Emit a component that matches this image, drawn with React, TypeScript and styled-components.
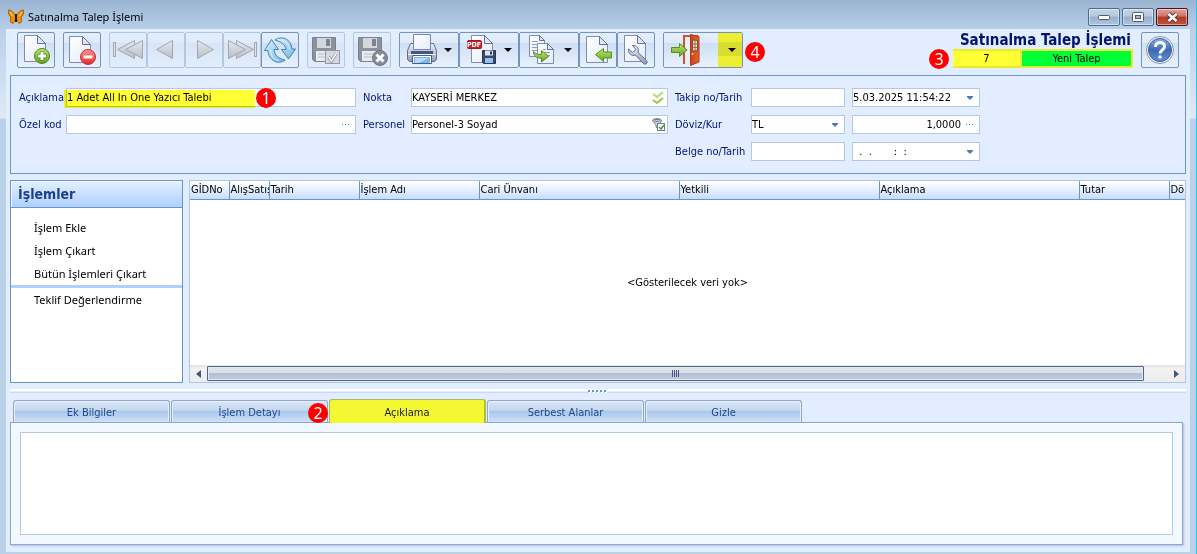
import React, { useState } from "react";
import styled, { createGlobalStyle, css } from "styled-components";

const uiFont = '"DejaVu Sans Condensed", "Liberation Sans", sans-serif';
const menuFont = '"Noto Sans", "Open Sans", sans-serif';

const Global = createGlobalStyle`
  * { box-sizing: border-box; }
  body { margin: 0; font-family: ${uiFont}; font-size: 11px; color: #000; }
  button, input, select, textarea { font: inherit; color: inherit; margin: 0; border-radius: 0; outline: none; }
  svg { display: block; flex: none; }
`;

const Frame = styled.div`
  min-height: 100vh;
  display: flex;
  flex-direction: column;
  padding: 0 6px 2px;
  border-right: 1px solid #22c8ee;
  background: linear-gradient(#9ab4d1 0, #b8cfe9 29px, #dfeaf7 118px, #bad1ea 119px);
`;

const TitleBar = styled.header`
  height: 29px;
  display: flex;
  align-items: center;
  gap: 4px;
  padding: 5px 2px 0 2px;
  font-family: ${menuFont};
`;

const Caption = styled.span`
  flex: 1;
  line-height: 16px;
`;

const WindowButtons = styled.div`
  display: flex;
  gap: 2px;
`;

const WindowButton = styled.button<{ $close?: boolean }>`
  width: 32px;
  height: 18px;
  padding: 0;
  display: grid;
  place-items: center;
  border: 1px solid ${(p) => (p.$close ? "#4b1420" : "#53698a")};
  border-radius: 2px;
  box-shadow: inset 0 0 0 1px rgba(255, 255, 255, 0.45);
  background: ${(p) =>
    p.$close
      ? "linear-gradient(#dda49a 0, #cb7567 45%, #b03a28 50%, #bf5538 100%)"
      : "linear-gradient(#c6d6e8 0, #b4c7dd 45%, #98b0cc 50%, #aec4dd 100%)"};
`;

const Client = styled.main`
  flex: 1;
  display: flex;
  flex-direction: column;
  padding: 3px 4px 7px;
  background: #e2eeff;
`;

const Toolbar = styled.div`
  display: flex;
  align-items: center;
  gap: 8px;
  padding: 0 7px;
`;

const ButtonGroup = styled.div`
  display: flex;
  position: relative;
`;

const ToolButton = styled.button<{ $wide?: number }>`
  width: ${(p) => p.$wide ?? 38}px;
  height: 36px;
  padding: 0;
  display: flex;
  overflow: hidden;
  border: 1px solid #7394be;
  border-radius: 2px;
  background: linear-gradient(#e6effc 0, #deeafa 28%, #cfdff3 30%, #d9e6f7 60%, #e9f2fd 100%);
  &:disabled {
    border-color: #b4c7e0;
    background: linear-gradient(#e3eefd 0, #dfebfb 28%, #d7e5f7 30%, #e3edfb 100%);
  }
`;

const Status = styled.div`
  margin-left: auto;
  width: 183px;
  display: flex;
  flex-direction: column;
  position: relative;
`;

const StatusTitle = styled.h1`
  margin: 0;
  padding-right: 2px;
  font-size: 15px;
  line-height: 17px;
  text-align: right;
  color: #00146e;
`;

const StatusCells = styled.div`
  margin-left: 3px;
  display: grid;
  grid-template-columns: 67px 1fr;
  gap: 2px;
  padding: 2px 2px 2px 0;
  background: #e9ea35;
`;

const StatusCell = styled.span<{ $green?: boolean }>`
  line-height: 15px;
  text-align: center;
  background: ${(p) => (p.$green ? "#00ff37" : "#ffff33")};
`;

const badgeAt = {
  description: css`left: 245px; top: 12px;`,
  tab: css`right: -1px; top: 2px;`,
  status: css`left: -21px; top: 17px;`,
  exit: css`left: 82px; top: 10px;`,
};

const Badge = styled.span<{ $at: keyof typeof badgeAt }>`
  position: absolute;
  z-index: 2;
  ${(p) => badgeAt[p.$at]}
  width: 20px;
  height: 20px;
  border-radius: 50%;
  background: #fe0000;
  color: #fff;
  font-family: ${menuFont};
  font-size: 16px;
  line-height: 20px;
  text-align: center;
`;

const FormPanel = styled.form`
  position: relative;
  margin-top: 7px;
  min-height: 99px;
  padding: 12px 8px;
  display: grid;
  grid-template-columns: 40px 290px 41px 257px 69px 94px 128px;
  grid-auto-rows: 19px;
  column-gap: 7px;
  row-gap: 8px;
  align-items: center;
  border: 1px solid #6795cf;
  color: #00147a;
`;

const Label = styled.label<{ $col?: number }>`
  white-space: nowrap;
  line-height: 16px;
  ${(p) => p.$col && `grid-column-start: ${p.$col};`}
`;

const Field = styled.div`
  height: 19px;
  display: flex;
  align-items: center;
  background: #fff;
  border: 1px solid #b3c8e4;
  color: #000;
  position: relative;
`;

const TextInput = styled.input<{ $right?: boolean }>`
  flex: 1;
  min-width: 0;
  height: 17px;
  padding: 0;
  border: 0;
  background: none;
  text-align: ${(p) => (p.$right ? "right" : "left")};
`;

const Currency = styled.select`
  flex: 1;
  height: 17px;
  padding: 0;
  border: 0;
  appearance: none;
  background: none;
`;

const FieldButton = styled.button`
  width: 18px;
  height: 17px;
  padding: 0;
  border: 0;
  background: none;
  display: grid;
  place-items: center;
`;

const ArrowMark = styled.span`
  width: 18px;
  display: grid;
  place-items: center;
  pointer-events: none;
`;

const Marker = styled.span`
  position: absolute;
  inset: 1px 100px -2px -3px;
  background: #ffff33;
  mix-blend-mode: multiply;
  pointer-events: none;
`;

const Middle = styled.section`
  margin-top: 6px;
  height: 203px;
  display: flex;
  gap: 6px;
`;

const SidePanel = styled.nav`
  flex: none;
  width: 173px;
  background: #fff;
  border: 1px solid #6795cf;
`;

const SideTitle = styled.h2`
  margin: 0;
  height: 27px;
  padding: 0 7px;
  font-size: 14px;
  line-height: 26px;
  color: #1b3f8b;
  border-bottom: 1px solid #6795cf;
  box-shadow: inset 1px 1px 0 #f4f9ff;
  background: linear-gradient(#e3efff, #afd0ff);
`;

const SideList = styled.ul<{ $first?: boolean }>`
  list-style: none;
  margin: 0;
  padding: ${(p) => (p.$first ? "8px 0 0" : "0")};
  ${(p) => p.$first && "border-bottom: 3px solid #b0cfff;"}
`;

const SideLink = styled.a`
  display: block;
  padding-left: 23px;
  font-family: ${menuFont};
  line-height: 23px;
  color: #000;
  text-decoration: none;
`;

const GridPanel = styled.div`
  flex: 1;
  min-width: 0;
  display: flex;
  flex-direction: column;
  background: #fff;
  border: 1px solid #b0c6e6;
`;

const DataTable = styled.table`
  flex: 1;
  width: 100%;
  table-layout: fixed;
  border-collapse: collapse;
`;

const TableArea = styled.div`
  flex: 1;
  display: flex;
`;

const HeadCell = styled.th<{ $w?: number }>`
  ${(p) => p.$w && `width: ${p.$w}px;`}
  height: 18px;
  padding: 0 0 0 1px;
  overflow: hidden;
  white-space: nowrap;
  text-align: left;
  font-weight: 400;
  line-height: 17px;
  border-right: 1px solid #6795cf;
  border-bottom: 1px solid #6795cf;
  background: linear-gradient(#fff, #dfecff 60%, #c5dcff);
  &:last-child { border-right: 0; }
`;

const EmptyCell = styled.td`
  padding: 0;
  text-align: center;
`;

const ScrollBar = styled.div`
  height: 17px;
  display: flex;
  align-items: center;
  background: linear-gradient(#e3e3e3, #f1f1f1 20%, #ededed);
`;

const ScrollArrow = styled.button`
  width: 17px;
  height: 17px;
  padding: 0;
  border: 0;
  background: none;
  display: grid;
  place-items: center;
`;

const ScrollTrack = styled.div`
  flex: 1;
  padding-right: 24px;
`;

const ScrollThumb = styled.div`
  height: 15px;
  display: grid;
  place-items: center;
  border: 1px solid #4f638d;
  border-radius: 1px;
  box-shadow: inset 0 0 0 1px #e6ebf2;
  background: linear-gradient(#dfe4ea 0, #d9e0e8 48%, #b2c1d5 50%, #bccbdd 100%);
`;

const Splitter = styled.div`
  margin-top: 6px;
  height: 4px;
  display: flex;
  justify-content: center;
  background: linear-gradient(#fff 0 2px, #e2eeff 2px 3px, #bfdbff 3px 4px);
`;

const Tabs = styled.div`
  margin: 6px 0 0 3px;
  height: 24px;
  display: flex;
  align-items: flex-end;
  gap: 1px;
  position: relative;
  z-index: 1;
`;

const Tab = styled.button<{ $active: boolean }>`
  position: relative;
  width: 157px;
  height: ${(p) => (p.$active ? 24 : 22)}px;
  padding: 2px 0 0;
  line-height: 18px;
  border: 1px solid #8ea6cc;
  border-bottom: 0;
  border-radius: 3px 3px 0 0;
  ${(p) =>
    p.$active
      ? css`
          color: #1a1a1a;
          border-color: #b3b560;
          background: #f3f833;
          border-right: 2px solid #b6b93c;
        `
      : css`
          color: #1b4590;
          margin-bottom: 1px;
          box-shadow: inset 1px 1px 0 #e5effb, inset -1px 0 0 #e5effb;
          background: linear-gradient(#dbe7f6 0, #c3d6ef 45%, #a9c7ec 50%, #cfe1f7 100%);
        `}
`;

const TabPanel = styled.section`
  flex: 1;
  display: flex;
  margin: -1px 3px 0 0;
  padding: 9px;
  border: 1px solid #8ea6cc;
  background: #f2f8ff;
  box-shadow: 1px 1px 2px #a9bedd;
`;

const Notes = styled.textarea`
  flex: 1;
  min-height: 60px;
  resize: none;
  border: 1px solid #b3c8e4;
  background: #fff;
`;

/* ---------- drawings ---------- */

const Icon = ({ w = 38, children }: { w?: number; children: React.ReactNode }) => (
  <svg width={w - 2} height="34" viewBox={`1 1 ${w - 2} 34`} fill="none">
    {children}
  </svg>
);

const HiddenSvg = styled.svg`
  position: absolute;
`;

const Defs = () => (
  <HiddenSvg width="0" height="0" aria-hidden="true">
    <defs>
      <linearGradient id="paper" x1="0" y1="0" x2="1" y2="1">
        <stop offset="0" stopColor="#fff" /><stop offset="1" stopColor="#e4ebf8" />
      </linearGradient>
      <linearGradient id="green" x1="0" y1="0" x2="0" y2="1">
        <stop offset="0" stopColor="#c5e57a" /><stop offset="1" stopColor="#5fa51b" />
      </linearGradient>
      <linearGradient id="red" x1="0" y1="0" x2="0" y2="1">
        <stop offset="0" stopColor="#ff9a98" /><stop offset="1" stopColor="#e82424" />
      </linearGradient>
      <linearGradient id="grey" x1="0" y1="0" x2="0" y2="1">
        <stop offset="0" stopColor="#e6e9ed" /><stop offset="1" stopColor="#b9bec6" />
      </linearGradient>
      <linearGradient id="sky" x1="0" y1="0" x2="1" y2="1">
        <stop offset="0" stopColor="#d9f0fc" /><stop offset="1" stopColor="#6fb6e4" />
      </linearGradient>
      <linearGradient id="steel" x1="0" y1="0" x2="0" y2="1">
        <stop offset="0" stopColor="#f0f2f8" /><stop offset="1" stopColor="#8f9ab5" />
      </linearGradient>
      <linearGradient id="door" x1="0" y1="0" x2="1" y2="0">
        <stop offset="0" stopColor="#c9431c" /><stop offset="1" stopColor="#e8622f" />
      </linearGradient>
      <linearGradient id="ball" x1="0" y1="0" x2="0" y2="1">
        <stop offset="0" stopColor="#8db0e4" /><stop offset=".5" stopColor="#3c68b6" /><stop offset="1" stopColor="#5e92d8" />
      </linearGradient>
    </defs>
  </HiddenSvg>
);

const Page = ({ x, y, w, h, f = 8 }: { x: number; y: number; w: number; h: number; f?: number }) => (
  <g stroke="#7b8db8" strokeLinejoin="round">
    <path d={`M${x} ${y}h${w - f}l${f} ${f}v${h - f}h-${w}z`} fill="url(#paper)" />
    <path d={`M${x + w - f} ${y}v${f}h${f}z`} fill="#dfe7f6" stroke="#60719f" />
  </g>
);

const Caret = ({ x }: { x: number }) => <path d={`M${x - 4} 16h8l-4 4z`} fill="#000" />;

const Floppy = () => (
  <g>
    <path d="M5.500 5.500h23v24h-21l-2-2z" fill="#8b929d" stroke="#7b828d" />
    <path d="M10 6h14v10H10z" fill="#d4d8de" />
    <path d="M19 7h4v7h-4z" fill="#7c838e" />
    <path d="M9 19h16v10H9z" fill="#e8ebef" />
    <path d="M11 22h12M11 25h12" stroke="#b9bfc8" />
  </g>
);

const AddIcon = () => (
  <Icon>
    <Page x={7.5} y={3.500} w={21} h={26} />
    <circle cx="25" cy="24" r="7.500" fill="url(#green)" stroke="#4a8a12" />
    <path d="M25 19.500v9M20.500 24h9" stroke="#3f7d10" strokeWidth="4.500" />
    <path d="M25 20v8M21 24h8" stroke="#fff" strokeWidth="3" />
  </Icon>
);

const RemoveIcon = () => (
  <Icon>
    <Page x={6.500} y={4.500} w={21} h={26} />
    <circle cx="25" cy="25" r="7.500" fill="url(#red)" stroke="#d02a2a" />
    <path d="M20.500 25h9" stroke="#fff" strokeWidth="3" />
  </Icon>
);

const Tri = ({ x, dir, w = 17 }: { x: number; dir: 1 | -1; w?: number }) => (
  <path
    d={dir < 0 ? `M${x} 17.500L${x + w} 8.500v18z` : `M${x + w} 17.500L${x} 8.500v18z`}
    fill="url(#grey)" stroke="#a0a7b2" strokeLinejoin="round"
  />
);

const FirstIcon = () => (
  <Icon>
    <rect x="4.500" y="10.500" width="2" height="14" fill="#e1e4e9" stroke="#a0a7b2" />
    <Tri x={8.500} dir={-1} /><Tri x={16.500} dir={-1} />
  </Icon>
);
const PrevIcon = () => <Icon><Tri x={9.500} dir={-1} w={16} /></Icon>;
const NextIcon = () => <Icon><Tri x={12.500} dir={1} w={16} /></Icon>;
const LastIcon = () => (
  <Icon>
    <Tri x={13.500} dir={1} /><Tri x={5.500} dir={1} />
    <rect x="31.500" y="10.500" width="2" height="14" fill="#e1e4e9" stroke="#a0a7b2" />
  </Icon>
);

const RefreshIcon = () => (
  <Icon>
    <g fill="url(#sky)" stroke="#3f82b8" strokeLinejoin="round">
      <path d="M14 8C20 3.500 30 6 31 17h3.500L27.500 27 20.500 17.500h4.500C24.500 12 19.500 10 14 8z" />
      <path d="M24 28C18 33 7.500 29.500 7 18.500H3.500L10.500 7.500 17.500 17.500H13C13.500 23.500 17.500 26.500 24 28z" />
    </g>
    <path d="M9.500 18C10 25 13.500 28 18 28.500M21 8.500c4 .5 6.500 3 7.500 9" stroke="#eefaff" opacity=".8" />
  </Icon>
);

const SaveOffIcon = () => (
  <Icon>
    <Floppy />
    <rect x="18.500" y="18.500" width="14" height="13" fill="#d6dae0" stroke="#9399a3" />
    <path d="M21.500 25l3 4 5-8" stroke="#8b919b" strokeWidth="3" />
    <path d="M21.500 25l3 4 5-8" stroke="#fff" strokeWidth="1.500" />
  </Icon>
);

const CancelIcon = () => (
  <Icon>
    <Floppy />
    <circle cx="27" cy="26" r="7.500" fill="#858b94" stroke="#6f757e" />
    <path d="M23.500 22.500l7 7M30.500 22.500l-7 7" stroke="#fff" strokeWidth="3" />
  </Icon>
);

const PrinterIcon = () => (
  <Icon w={60}>
    <path d="M11.500 11.500h3v6h17v-6h3l3 7v9l-2 2h-25l-2-2v-9z" fill="url(#steel)" stroke="#5e6c94" strokeLinejoin="round" />
    <path d="M14.500 17.500v-15h17v15z" fill="url(#paper)" stroke="#7885ab" />
    <path d="M12 20.500h22" stroke="#46557e" strokeWidth="3" />
    <path d="M9 22.500h28" stroke="#f4f6fb" />
    <path d="M14.500 24.500h17v7h-17z" fill="#79b6ea" stroke="#fff" />
    <path d="M13.500 23.500h19v8h-19z" stroke="#4d5b84" />
    <path d="M16 26h14l-10 5h-4z" fill="#b4dbf8" />
    <Caret x={49} />
  </Icon>
);

const PdfIcon = () => (
  <Icon w={60}>
    <Page x={12.500} y={3.500} w={21} h={27} />
    <rect x="8.500" y="8.500" width="14" height="8" rx="1" fill="#cc2027" stroke="#a9141b" />
    <text x="15" y="15" fontSize="7" fontWeight="700" fontFamily="DejaVu Sans Condensed, sans-serif" textAnchor="middle" fill="#fff">PDF</text>
    <path d="M23.500 18.500h13v13h-12l-1-1z" fill="#3a466b" stroke="#2b3557" />
    <path d="M26 18.500h8v5h-8z" fill="#dfe5f0" />
    <path d="M31 19.500h2v3h-2z" fill="#2b3557" />
    <path d="M26 26h8v5h-8z" fill="#8fc4ef" />
    <Caret x={49} />
  </Icon>
);

const CopyIcon = () => (
  <Icon w={60}>
    <Page x={10.500} y={3.500} w={15} h={21} f={5} />
    <path d="M13 9.500h6M13 12.500h8M13 15.500h7M13 18.500h6" stroke="#8d9dc2" />
    <Page x={18.500} y={11.500} w={16} h={20} f={6} />
    <path d="M24 17.500h3M24 20.500h7M25 23.500h6" stroke="#8d9dc2" />
    <path d="M14.500 19.500c2 2.500 4 3 8 3v-4l7 6-7 5.500v-4c-5 .5-8-2-8-6.500z" fill="url(#green)" stroke="#568f1c" strokeLinejoin="round" />
    <Caret x={49} />
  </Icon>
);

const ImportIcon = () => (
  <Icon>
    <Page x={7.500} y={4.500} w={21} h={26} />
    <path d="M16.500 22.500l8-6v3.500h8v6h-8v3.500z" fill="url(#green)" stroke="#568f1c" strokeLinejoin="round" />
  </Icon>
);

const SettingsIcon = () => (
  <Icon>
    <Page x={7.500} y={3.500} w={21} h={26} />
    <path
      d="M15.500 13.500c4-.5 7 3 5.500 7l8.500 8c2 2-1 5-3 3l-8-8.500c-4 1.500-7.500-1.500-7-6l4 3.500 3.500-3z"
      fill="url(#steel)" stroke="#596a93" strokeLinejoin="round"
    />
  </Icon>
);

const ExitIcon = () => (
  <Icon w={80}>
    <rect x="55" y="1" width="24" height="34" fill="#ecee2f" />
    <rect x="55" y="10" width="24" height="14" fill="#d9dd33" />
    <path d="M21 32V4h13v4" stroke="#d2502a" strokeWidth="2" />
    <path d="M22.500 6h5v24h-5z" fill="#e7eef8" />
    <path d="M27.500 2.500l8.500 2V30l-8.500 3.500z" fill="url(#door)" stroke="#b23b17" />
    <path d="M29.500 8l5 .5v10l-5 .5z" fill="#dfe3d8" stroke="#8a4a28" />
    <path d="M32 8v11M29.500 12h5M29.500 15.500h5" stroke="#a0684a" />
    <circle cx="29.500" cy="22" r="1" fill="#ffd36b" />
    <path d="M8.500 15.500h8v-4l7.500 6.500-7.500 6.500v-4h-8z" fill="url(#green)" stroke="#568f1c" strokeLinejoin="round" />
    <path d="M65 16h8l-4 4z" fill="#000" />
  </Icon>
);

const HelpIcon = () => (
  <Icon>
    <circle cx="19" cy="18" r="13.500" fill="#eef2fa" stroke="#8793b2" />
    <circle cx="19" cy="18" r="11.500" fill="url(#ball)" stroke="#3a5b9c" />
    <path d="M14.500 15c0-6 9-6 9-.5 0 3.500-4.500 3.500-4.500 7" stroke="#fff" strokeWidth="3" />
    <circle cx="19" cy="25" r="1.800" fill="#fff" />
  </Icon>
);

const Butterfly = () => (
  <svg width="16" height="16" viewBox="0 0 16 16">
    <path d="M7.500 7C6 3 3 1 .500 1c-.5 3 .5 6 2.500 7-1 3-1 5 1 6.500 2-.5 3.500-3 3.500-5z" fill="#f08f12" stroke="#a65d0a" />
    <path d="M8.500 7C10 3 13 1 15.500 1c.5 3-.5 6-2.500 7 1 3 1 5-1 6.500-2-.5-3.500-3-3.500-5z" fill="#f08f12" stroke="#a65d0a" />
    <path d="M8 5v8" stroke="#2e1a05" strokeWidth="2" />
    <path d="M2 3l3 4M14 3l-3 4" stroke="#ffb52e" strokeWidth="1.500" />
  </svg>
);

const Down = () => (
  <svg width="6" height="4" viewBox="0 0 6 4"><path d="M0 0h6v1L3 4 0 1z" fill="#4a78b5" /></svg>
);
const Dots = () => (
  <svg width="8" height="2" viewBox="0 0 8 2"><path d="M0 0h1v1H0zM3 0h1v1H3zM6 0h1v1H6z" fill="#3f6fb4" /></svg>
);
const Checks = () => (
  <svg width="12" height="13" viewBox="0 0 12 13" fill="none" strokeWidth="2">
    <path d="M1 3l4 3 6-5" stroke="#b5d96a" /><path d="M1 9l4 3 6-5" stroke="#98c93f" />
  </svg>
);
const Filter = () => (
  <svg width="13" height="13" viewBox="0 0 13 13" fill="none">
    <path d="M.500 2.500c0-2.500 9-2.500 9 0C9.500 4 7 6 6.500 7v4L4 9V6.500C3 5.500.500 4 .500 2.500z" fill="#d4d9e4" stroke="#6d7790" />
    <ellipse cx="5" cy="2.500" rx="3" ry="1" stroke="#6d7790" />
    <rect x="5.500" y="5.500" width="7" height="7" fill="#fff" stroke="#6b7aa5" />
    <path d="M7 9l2 2 3-4" stroke="#4e9a1d" strokeWidth="1.500" />
  </svg>
);

/* ---------- data ---------- */

const columns: { title: string; width?: number }[] = [
  { title: "GİDNo", width: 39 },
  { title: "AlışSatış", width: 40 },
  { title: "Tarih", width: 90 },
  { title: "İşlem Adı", width: 120 },
  { title: "Cari Ünvanı", width: 200 },
  { title: "Yetkili", width: 200 },
  { title: "Açıklama", width: 200 },
  { title: "Tutar", width: 90 },
  { title: "Dö" },
];

const tabs = ["Ek Bilgiler", "İşlem Detayı", "Açıklama", "Serbest Alanlar", "Gizle"];

export default function App() {
  const [active, setActive] = useState("Açıklama");
  return (
    <Frame>
      <Global />
      <Defs />
      <TitleBar>
        <Butterfly />
        <Caption>Satınalma Talep İşlemi</Caption>
        <WindowButtons>
          <WindowButton aria-label="Simge durumuna küçült">
            <svg width="12" height="6" viewBox="0 0 12 6"><rect x=".500" y="1.500" width="11" height="4" rx="1" fill="#fff" stroke="#4b5a70" /></svg>
          </WindowButton>
          <WindowButton aria-label="Ekranı kapla">
            <svg width="12" height="10" viewBox="0 0 12 10">
              <rect x=".500" y=".500" width="11" height="9" rx="1" fill="#fff" stroke="#4b5a70" />
              <rect x="3.500" y="3.500" width="5" height="3" fill="#a3b8d1" stroke="#4b5a70" />
            </svg>
          </WindowButton>
          <WindowButton $close aria-label="Kapat">
            <svg width="13" height="11" viewBox="0 0 13 11">
              <path d="M2.500 2l8 7M10.500 2l-8 7" stroke="#57333a" strokeWidth="4.500" />
              <path d="M2.500 2l8 7M10.500 2l-8 7" stroke="#fff" strokeWidth="2.500" />
            </svg>
          </WindowButton>
        </WindowButtons>
      </TitleBar>

      <Client>
        <Toolbar>
          <ToolButton aria-label="Yeni"><AddIcon /></ToolButton>
          <ToolButton aria-label="Sil"><RemoveIcon /></ToolButton>
          <ButtonGroup>
            <ToolButton disabled aria-label="İlk"><FirstIcon /></ToolButton>
            <ToolButton disabled aria-label="Önceki"><PrevIcon /></ToolButton>
            <ToolButton disabled aria-label="Sonraki"><NextIcon /></ToolButton>
            <ToolButton disabled aria-label="Son"><LastIcon /></ToolButton>
            <ToolButton aria-label="Yenile"><RefreshIcon /></ToolButton>
          </ButtonGroup>
          <ToolButton disabled aria-label="Kaydet"><SaveOffIcon /></ToolButton>
          <ToolButton disabled aria-label="Vazgeç"><CancelIcon /></ToolButton>
          <ButtonGroup>
            <ToolButton $wide={60} aria-label="Yazdır"><PrinterIcon /></ToolButton>
            <ToolButton $wide={60} aria-label="PDF kaydet"><PdfIcon /></ToolButton>
            <ToolButton $wide={60} aria-label="Kopyala"><CopyIcon /></ToolButton>
            <ToolButton aria-label="İçe al"><ImportIcon /></ToolButton>
            <ToolButton aria-label="Ayarlar"><SettingsIcon /></ToolButton>
          </ButtonGroup>
          <ButtonGroup>
            <ToolButton $wide={80} aria-label="Çıkış"><ExitIcon /></ToolButton>
            <Badge $at="exit">4</Badge>
          </ButtonGroup>
          <Status>
            <StatusTitle>Satınalma Talep İşlemi</StatusTitle>
            <StatusCells>
              <StatusCell>7</StatusCell>
              <StatusCell $green>Yeni Talep</StatusCell>
            </StatusCells>
            <Badge $at="status">3</Badge>
          </Status>
          <ToolButton aria-label="Yardım"><HelpIcon /></ToolButton>
        </Toolbar>

        <FormPanel onSubmit={(e) => e.preventDefault()}>
          <Label htmlFor="aciklama">Açıklama</Label>
          <Field>
            <TextInput id="aciklama" defaultValue="1 Adet All In One Yazıcı Talebi" />
            <Marker />
          </Field>
          <Label htmlFor="nokta">Nokta</Label>
          <Field>
            <TextInput id="nokta" defaultValue="KAYSERİ MERKEZ" />
            <FieldButton type="button" aria-label="Nokta seç"><Checks /></FieldButton>
          </Field>
          <Label htmlFor="takip">Takip no/Tarih</Label>
          <Field><TextInput id="takip" /></Field>
          <Field>
            <TextInput aria-label="Takip tarihi" defaultValue="5.03.2025 11:54:22" />
            <FieldButton type="button" aria-label="Tarih seç"><Down /></FieldButton>
          </Field>

          <Label htmlFor="ozelkod">Özel kod</Label>
          <Field>
            <TextInput id="ozelkod" />
            <FieldButton type="button" aria-label="Özel kod seç"><Dots /></FieldButton>
          </Field>
          <Label htmlFor="personel">Personel</Label>
          <Field>
            <TextInput id="personel" defaultValue="Personel-3 Soyad" />
            <FieldButton type="button" aria-label="Personel seç"><Filter /></FieldButton>
          </Field>
          <Label htmlFor="doviz">Döviz/Kur</Label>
          <Field>
            <Currency id="doviz" defaultValue="TL"><option>TL</option></Currency>
            <ArrowMark><Down /></ArrowMark>
          </Field>
          <Field>
            <TextInput $right aria-label="Kur" defaultValue="1,0000" />
            <FieldButton type="button" aria-label="Kur seç"><Dots /></FieldButton>
          </Field>

          <Label $col={5} htmlFor="belge">Belge no/Tarih</Label>
          <Field><TextInput id="belge" /></Field>
          <Field>
            <TextInput aria-label="Belge tarihi" defaultValue="  .  .       :  :" />
            <FieldButton type="button" aria-label="Tarih seç"><Down /></FieldButton>
          </Field>
          <Badge $at="description">1</Badge>
        </FormPanel>

        <Middle>
          <SidePanel>
            <SideTitle>İşlemler</SideTitle>
            <SideList $first>
              <li><SideLink href="#ekle">İşlem Ekle</SideLink></li>
              <li><SideLink href="#cikart">İşlem Çıkart</SideLink></li>
              <li><SideLink href="#butun">Bütün İşlemleri Çıkart</SideLink></li>
            </SideList>
            <SideList>
              <li><SideLink href="#teklif">Teklif Değerlendirme</SideLink></li>
            </SideList>
          </SidePanel>
          <GridPanel>
            <TableArea>
              <DataTable>
                <thead>
                  <tr>{columns.map((c) => <HeadCell key={c.title} $w={c.width}>{c.title}</HeadCell>)}</tr>
                </thead>
                <tbody>
                  <tr><EmptyCell colSpan={columns.length}>&lt;Gösterilecek veri yok&gt;</EmptyCell></tr>
                </tbody>
              </DataTable>
            </TableArea>
            <ScrollBar>
              <ScrollArrow aria-label="Sola kaydır">
                <svg width="5" height="8" viewBox="0 0 5 8"><path d="M5 0v8L0 4z" fill="#45557f" /></svg>
              </ScrollArrow>
              <ScrollTrack>
                <ScrollThumb>
                  <svg width="8" height="7" viewBox="0 0 8 7">
                    <path d="M.500 0v7M2.500 0v7M4.500 0v7M6.500 0v7" stroke="#4a5880" />
                  </svg>
                </ScrollThumb>
              </ScrollTrack>
              <ScrollArrow aria-label="Sağa kaydır">
                <svg width="5" height="8" viewBox="0 0 5 8"><path d="M0 0v8l5-4z" fill="#45557f" /></svg>
              </ScrollArrow>
            </ScrollBar>
          </GridPanel>
        </Middle>

        <Splitter>
          <svg width="20" height="4" viewBox="0 0 20 4">
            {[0, 4, 8, 12, 16].map((x) => (
              <g key={x}>
                <rect x={x + 1} y="2" width="2" height="2" fill="#fff" />
                <rect x={x} y="1" width="2" height="2" fill="#5f92d0" />
              </g>
            ))}
          </svg>
        </Splitter>

        <Tabs role="tablist">
          {tabs.map((t) => (
            <Tab key={t} role="tab" aria-selected={t === active} $active={t === active} onClick={() => setActive(t)}>
              {t}
              {t === "İşlem Detayı" && <Badge $at="tab">2</Badge>}
            </Tab>
          ))}
        </Tabs>
        <TabPanel role="tabpanel">
          <Notes aria-label="Açıklama metni" />
        </TabPanel>
      </Client>
    </Frame>
  );
}
